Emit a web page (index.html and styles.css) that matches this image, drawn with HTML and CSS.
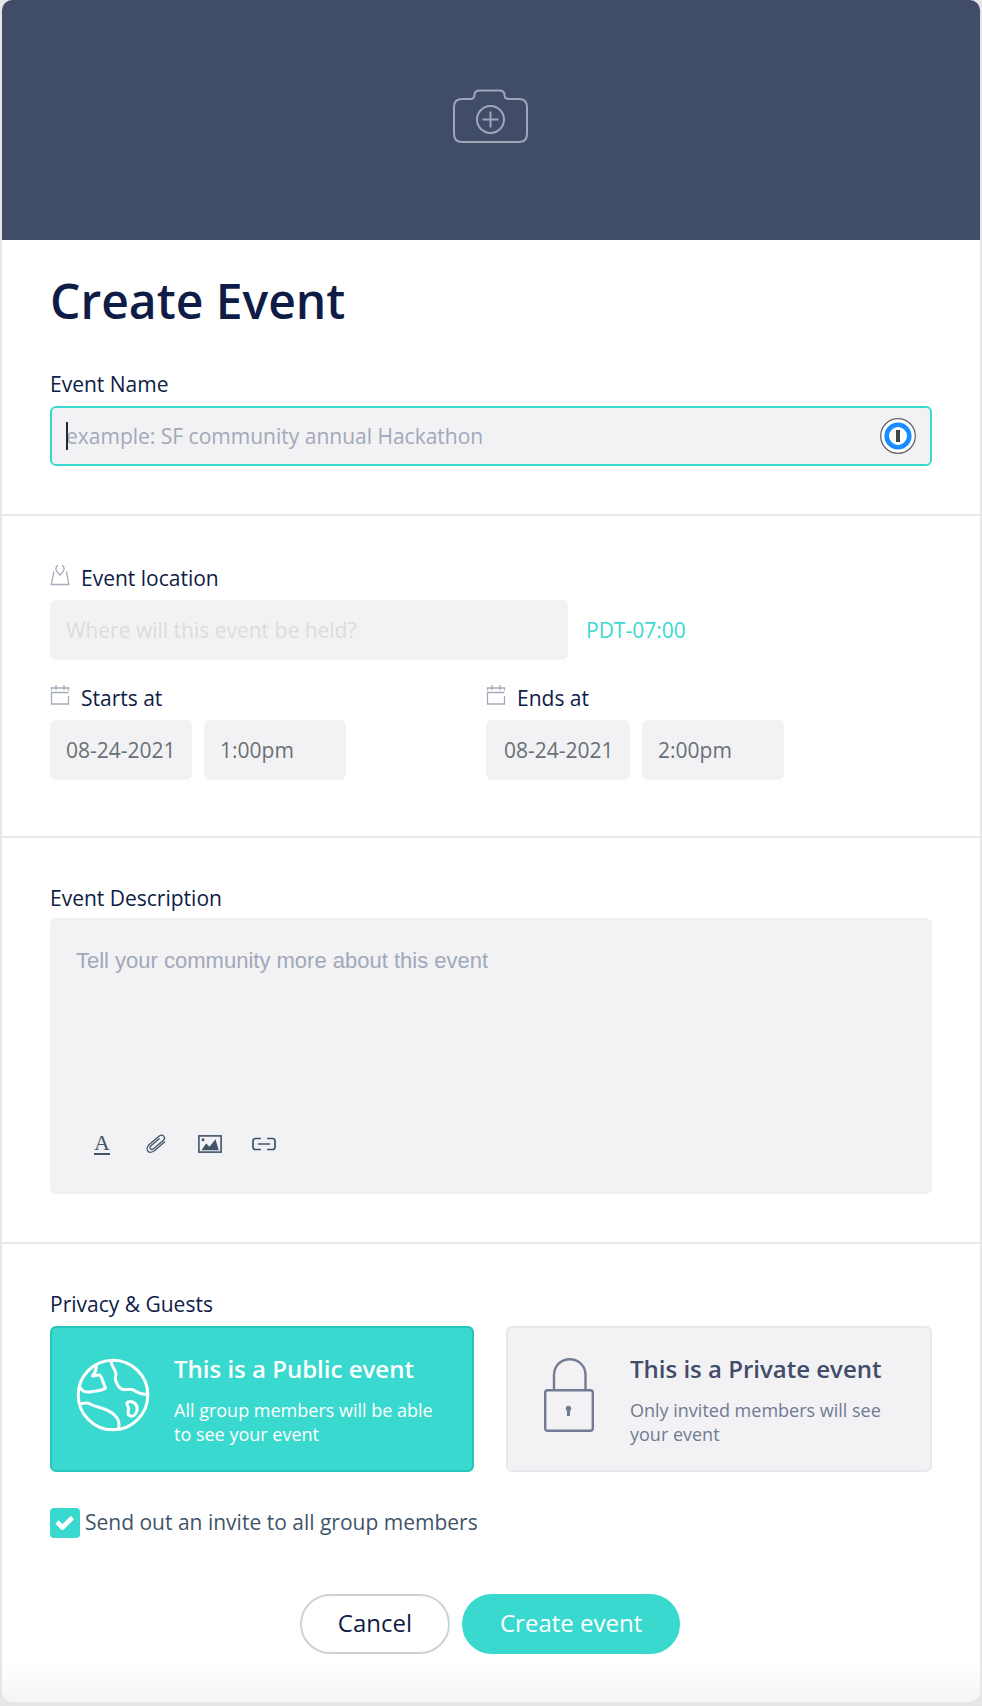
FILE: index.html
```html
<!DOCTYPE html>
<html lang="en">
<head>
<meta charset="utf-8">
<title>Create Event</title>
<link rel="stylesheet" href="styles.css">
</head>
<body>
<form class="modal">
  <button type="button" class="cover" aria-label="Add cover photo">
    <svg class="cover-icon" viewBox="0 0 76 56" fill="none" stroke="#a0a6b8" stroke-width="2">
      <path d="M9 10h8c3 0 4.500-1 4.500-4C21.500 3 23.500 1.500 26.500 1.500h20c3 0 5 1.500 5 4.500C51.500 9 53 10 56 10h10q8 0 8 8v27q0 8-8 8H9q-8 0-8-8V18q0-8 8-8z"/>
      <circle cx="37.500" cy="30.500" r="13.500"/>
      <path d="M37.500 22.500v16M29.500 30.500h16"/>
    </svg>
  </button>

  <section class="section section-name">
    <h1 class="title">Create Event</h1>
    <label class="label" for="event-name">Event Name</label>
    <div class="name-field">
      <input class="field field-active" id="event-name" type="text" placeholder="example: SF community annual Hackathon">
      <span class="caret"></span>
      <button type="button" class="key-button" aria-label="Fill from password manager">
        <svg viewBox="0 0 36 36" width="36" height="36">
          <circle cx="18" cy="18" r="17.300" fill="#fff" stroke="#666" stroke-width="1.300"/>
          <circle cx="18" cy="18" r="11.300" fill="#fff" stroke="#1a8cff" stroke-width="4.600"/>
          <rect x="16" y="12" width="4" height="12" fill="#444"/>
        </svg>
      </button>
    </div>
  </section>

  <section class="section section-when">
    <label class="label label-icon" for="location">
      <svg class="small-icon" viewBox="0 0 20 22" fill="none" stroke="#a6abbc" stroke-width="1.300">
        <path d="M4 7.500 1.200 20.500h17.600L16.500 7.500"/>
        <path d="M8 1.300C5.500 2.500 5.700 5.500 6.500 7l3.500 4.200L13.500 7c1-2 .8-4.700-1.500-5.700"/>
      </svg>
      Event location
    </label>
    <div class="location-row">
      <input class="field field-location" id="location" type="text" placeholder="Where will this event be held?">
      <a class="timezone" href="#timezone">PDT-07:00</a>
    </div>
    <div class="times">
      <div>
        <label class="label label-icon" for="start-date">
          <svg class="small-icon" viewBox="0 0 20 22" fill="none" stroke="#a6abbc" stroke-width="1.300">
            <path d="M1.500 6.500V4h17v2.500M6 1v5M14 1v5M18.500 12V20h-17V8.500h17"/>
          </svg>
          Starts at
        </label>
        <div class="time-row">
          <input class="field field-time" id="start-date" type="text" value="08-24-2021">
          <input class="field field-time" type="text" value="1:00pm" aria-label="Start time">
        </div>
      </div>
      <div>
        <label class="label label-icon" for="end-date">
          <svg class="small-icon" viewBox="0 0 20 22" fill="none" stroke="#a6abbc" stroke-width="1.300">
            <path d="M1.500 6.500V4h17v2.500M6 1v5M14 1v5M18.500 12V20h-17V8.500h17"/>
          </svg>
          Ends at
        </label>
        <div class="time-row">
          <input class="field field-time field-end-date" id="end-date" type="text" value="08-24-2021">
          <input class="field field-time" type="text" value="2:00pm" aria-label="End time">
        </div>
      </div>
    </div>
  </section>

  <section class="section section-description">
    <label class="label" for="description">Event Description</label>
    <div class="editor">
      <textarea class="editor-text" id="description" placeholder="Tell your community more about this event"></textarea>
      <div class="toolbar">
        <button type="button" class="tool tool-text" aria-label="Text style"><span>A</span></button>
        <button type="button" class="tool" aria-label="Attach file">
          <svg viewBox="0 0 24 20" fill="none" stroke="#3f5468" stroke-width="1.300" stroke-linecap="round">
            <path d="M20.500 8 11 16.300c-2.500 2.100-5.500 2.600-7 .9s-1-4.500 1-6.500L15 2.300c1.500-1.200 3.500-1.500 4.700-.2s1 3.100-.5 4.500l-9.400 8c-1.200 1-2.500 1.200-3.300.3s-.6-2.200.5-3.200l8.200-7"/>
          </svg>
        </button>
        <button type="button" class="tool" aria-label="Insert image">
          <svg viewBox="0 0 24 20">
            <rect x="0.900" y="1.900" width="22.200" height="16.200" fill="none" stroke="#3f5468" stroke-width="1.600"/>
            <circle cx="5" cy="5.700" r="1.500" fill="#3f5468"/>
            <path d="M3.500 16.200 8 9.500l3.500 3.200L17.500 5.200l3.200 11z" fill="#3f5468"/>
          </svg>
        </button>
        <button type="button" class="tool" aria-label="Insert link">
          <svg viewBox="0 0 24 20" fill="none" stroke="#3f5468" stroke-width="1.700">
            <path d="M9 4.500H3.500Q1 4.500 1 7v6q0 2.500 2.500 2.500H9M15 4.500h5.500Q23 4.500 23 7v6q0 2.500-2.500 2.500H15M6 10h12"/>
          </svg>
        </button>
      </div>
    </div>
  </section>

  <section class="section section-privacy">
    <fieldset class="privacy">
      <legend class="label">Privacy &amp; Guests</legend>
      <div class="cards">
        <label class="card">
          <input class="card-radio" type="radio" name="privacy" checked>
          <svg class="card-icon" viewBox="0 0 74 74" fill="none" stroke="#fff" stroke-width="3" stroke-linecap="round" stroke-linejoin="round">
            <circle cx="37" cy="37" r="34.800"/>
            <path d="M20 7.500C21 12 19 14.500 16.500 18c2 .5 4-1.500 7-1 2 .5 4 9 6 13-4 3-10 3-15 4-6 .3-8-.5-10-4"/>
            <path d="M35 2.500c.5 8 5.500 9.500 5 14-.5 2-1.500 4 0 7 2 5.500 5 8 8 8 3 .5 5-.5 8 0 4 1 6 5 14 5"/>
            <path d="M4 46c10-3 9 1 18 3 10 2.500 14 5.500 17 8.500 4 4 5 8 3.500 13.500"/>
            <path d="M51 45c2-3 9-1 10 4 1 6-3 10-7 9-4-2-1-6-1.500-8C52 48 50.500 46.500 51 45z"/>
          </svg>
          <span class="card-body">
            <span class="card-title">This is a Public event</span>
            <span class="card-text">All group members will be able to see your event</span>
          </span>
        </label>
        <label class="card">
          <input class="card-radio" type="radio" name="privacy">
          <svg class="card-icon" viewBox="0 0 74 74" fill="none" stroke="#727b93" stroke-width="2.400">
            <rect x="13.200" y="32.200" width="47.600" height="40.500" rx="2.500"/>
            <path d="M22 32V17c0-9 7-15.800 15.800-15.800S53.500 8 53.500 17v15"/>
            <circle cx="36.500" cy="50.500" r="2.700" fill="#727b93" stroke="none"/>
            <path d="M36.500 50v8" stroke-width="3"/>
          </svg>
          <span class="card-body">
            <span class="card-title">This is a Private event</span>
            <span class="card-text">Only invited members will see your event</span>
          </span>
        </label>
      </div>
    </fieldset>
    <label class="invite">
      <span class="check">
        <input class="check-input" type="checkbox" checked>
        <svg class="check-mark" viewBox="0 0 30 30" fill="none" stroke="#fff" stroke-width="4.600" stroke-linejoin="round">
          <path d="m7 14 5.500 5.500L22.500 9.500"/>
        </svg>
      </span>
      <span class="invite-text">Send out an invite to all group members</span>
    </label>
    <div class="actions">
      <button type="button" class="button button-cancel">Cancel</button>
      <button type="submit" class="button button-create">Create event</button>
    </div>
  </section>
</form>
</body>
</html>
```
FILE: styles.css
```css
* {
  box-sizing: border-box;
}

body {
  margin: 0;
  padding: 0 2px 4px;
  background: #e6e6e9;
  color: #0e1c46;
  font-family: "Open Sans", "Noto Sans", sans-serif;
  font-size: 21px;
  line-height: 30px;
}

button,
input,
textarea {
  font: inherit;
  color: inherit;
}

.modal {
  overflow: hidden;
  border-radius: 10px;
  background: linear-gradient(to top, #f5f5f5, #fff 40px);
}

.cover {
  display: flex;
  justify-content: center;
  width: 100%;
  height: 240px;
  padding: 89px 0 0;
  border: 0;
  background: #414c69;
}

.cover-icon {
  width: 76px;
  height: 56px;
}

.section {
  padding: 44px 48px 48px;
  border-bottom: 2px solid #e8e8ec;
}

.section-name {
  padding-top: 28px;
}

.section-when {
  padding-top: 46px;
  padding-bottom: 56px;
}

.section-privacy {
  border-bottom: 0;
}

.title {
  margin: 0 0 34px;
  font-size: 48px;
  font-weight: 600;
  line-height: 66px;
}

.label {
  display: block;
  margin-bottom: 6px;
  padding: 0;
  line-height: 32px;
}

.section-description .label {
  margin-bottom: 4px;
}

.label-icon {
  display: flex;
  gap: 11px;
}

.small-icon {
  width: 20px;
  height: 24px;
  padding-top: 2px;
}

.field {
  display: block;
  width: 100%;
  height: 60px;
  padding: 0 14px;
  border: 2px solid #f2f2f4;
  border-radius: 6px;
  outline: 0;
  background: #f2f2f4;
  color: #687076;
}

.field-active {
  border-color: #3ad9cf;
}

.field::placeholder,
.editor-text::placeholder {
  color: #a1a8b9;
  opacity: 1;
}

.name-field {
  position: relative;
}

.caret {
  position: absolute;
  top: 16px;
  left: 16px;
  width: 2px;
  height: 28px;
  background: #222b35;
}

.key-button {
  position: absolute;
  top: 12px;
  right: 16px;
  width: 36px;
  height: 36px;
  padding: 0;
  border: 0;
  background: none;
}

.location-row {
  display: flex;
  align-items: center;
  gap: 18px;
  margin-bottom: 22px;
}

.field-location {
  width: 518px;
}

.field-location::placeholder {
  color: #dcdcdd;
}

.timezone {
  color: #3ad9cf;
  text-decoration: none;
}

.times {
  display: grid;
  grid-template-columns: 436fr 446fr;
}

.time-row {
  display: flex;
  gap: 12px;
}

.field-time {
  width: 142px;
}

.field-end-date {
  width: 144px;
  padding: 0 0 0 16px;
}

.editor {
  padding: 28px 26px 32px;
  border-radius: 6px;
  background: #f2f2f4;
}

.editor-text {
  display: block;
  width: 100%;
  height: 180px;
  padding: 0;
  border: 0;
  outline: 0;
  resize: none;
  background: none;
  font-family: "Liberation Sans", Arial, sans-serif;
  font-size: 22px;
}

.toolbar {
  display: flex;
  align-items: center;
  gap: 30px;
  padding-left: 16px;
  height: 36px;
}

.tool {
  display: flex;
  justify-content: center;
  width: 24px;
  padding: 0;
  border: 0;
  background: none;
}

.tool svg {
  width: 24px;
  height: 20px;
}

.tool-text {
  width: 20px;
  margin-right: 2px;
  color: #3f5468;
  font-family: "Liberation Serif", serif;
  font-size: 22px;
  line-height: 20px;
}

.tool-text span {
  border-bottom: 2px solid #3f5468;
}

.privacy {
  min-width: 0;
  margin: 0;
  padding: 0;
  border: 0;
}

.cards {
  display: grid;
  grid-template-columns: 424fr 426fr;
  gap: 32px;
}

.card {
  position: relative;
  display: flex;
  align-items: flex-start;
  gap: 24px;
  height: 146px;
  padding: 26px 24px;
  border: 2px solid #e7e8ec;
  border-radius: 6px;
  background: #f2f2f4;
  color: #717a93;
}

.card:has(:checked) {
  border-color: #26c6bc;
  background: #3ad9cf;
  color: #fff;
}

.card-radio {
  position: absolute;
  margin: 0;
  opacity: 0;
}

.card-icon {
  flex: none;
  width: 74px;
  height: 74px;
  margin-top: 4px;
}

.card-title {
  display: block;
  margin-bottom: 14px;
  color: #414c69;
  font-size: 24px;
  font-weight: 600;
  line-height: 30px;
}

.card:has(:checked) .card-title {
  color: #fff;
}

.card-text {
  display: block;
  font-size: 18px;
  line-height: 24px;
}

.invite {
  display: flex;
  align-items: flex-start;
  gap: 5px;
  margin: 36px 0 56px;
  color: #3f5468;
}

.invite-text {
  line-height: 28px;
}

.check {
  position: relative;
  width: 30px;
  height: 30px;
}

.check-input {
  appearance: none;
  display: block;
  width: 30px;
  height: 30px;
  margin: 0;
  border-radius: 4px;
  background: #3ad9cf;
}

.check-mark {
  position: absolute;
  inset: 0;
  pointer-events: none;
}

.actions {
  display: flex;
  justify-content: center;
  gap: 12px;
  padding-right: 2px;
}

.button {
  height: 60px;
  padding: 0 36px 2px;
  border: 2px solid #3ad9cf;
  border-radius: 30px;
  font-size: 24px;
}

.button-cancel {
  border-color: #cfd2d9;
  background: #fff;
}

.button-create {
  background: #3ad9cf;
  color: #fff;
}
```
